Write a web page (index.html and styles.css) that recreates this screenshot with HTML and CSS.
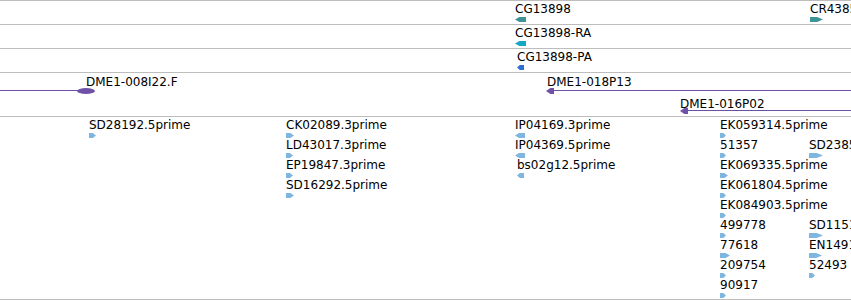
FILE: index.html
```html
<!DOCTYPE html>
<html>
<head>
    <meta charset="UTF-8">
    <link rel="stylesheet" href="styles.css">
</head>
<body>
    <div class="browser">
        <!-- Genes -->
        <div class="track track-gene">
            <div class="feature" style="left:515px;top:1px">
                <div class="name">CG13898</div>
                <div class="glyph rev gene" style="width:11px"></div>
            </div>
            <div class="feature" style="left:810px;top:1px">
                <div class="name">CR43859</div>
                <div class="glyph fwd gene" style="width:13px"></div>
            </div>
        </div>

        <!-- Transcripts -->
        <div class="track track-gene">
            <div class="feature" style="left:515px;top:1px">
                <div class="name">CG13898-RA</div>
                <div class="glyph rev mrna" style="width:11px"></div>
            </div>
        </div>

        <!-- Proteins -->
        <div class="track track-gene">
            <div class="feature" style="left:517px;top:1px">
                <div class="name">CG13898-PA</div>
                <div class="glyph rev protein" style="width:7px"></div>
            </div>
        </div>

        <!-- BAC clones -->
        <div class="track track-clone">
            <div class="clone-line" style="left:0;top:17px;width:80px"></div>
            <div class="clone-end" style="left:77px;top:15px"></div>
            <div class="feature" style="left:86px;top:2px">
                <div class="name">DME1-008I22.F</div>
            </div>

            <div class="feature" style="left:547px;top:2px">
                <div class="name">DME1-018P13</div>
            </div>
            <div class="clone-line" style="left:552px;top:17px;width:320px"></div>
            <div class="clone-head" style="left:546px;top:15px"></div>

            <div class="feature" style="left:680px;top:24px">
                <div class="name">DME1-016P02</div>
            </div>
            <div class="clone-line" style="left:686px;top:37px;width:200px"></div>
            <div class="clone-head" style="left:680px;top:35px"></div>
        </div>

        <!-- ESTs -->
        <div class="track track-est">
            <div class="feature" style="left:89px;top:1px">
                <div class="name">SD28192.5prime</div>
                <div class="glyph fwd est" style="width:7px"></div>
            </div>

            <div class="feature" style="left:286px;top:1px">
                <div class="name">CK02089.3prime</div>
                <div class="glyph fwd est" style="width:8px"></div>
            </div>
            <div class="feature" style="left:286px;top:21px">
                <div class="name">LD43017.3prime</div>
                <div class="glyph fwd est" style="width:7px"></div>
            </div>
            <div class="feature" style="left:286px;top:41px">
                <div class="name">EP19847.3prime</div>
                <div class="glyph fwd est" style="width:7px"></div>
            </div>
            <div class="feature" style="left:286px;top:61px">
                <div class="name">SD16292.5prime</div>
                <div class="glyph fwd est" style="width:8px"></div>
            </div>

            <div class="feature" style="left:515px;top:1px">
                <div class="name">IP04169.3prime</div>
                <div class="glyph rev est" style="width:10px"></div>
            </div>
            <div class="feature" style="left:515px;top:21px">
                <div class="name">IP04369.5prime</div>
                <div class="glyph rev est" style="width:10px"></div>
            </div>
            <div class="feature" style="left:517px;top:41px">
                <div class="name">bs02g12.5prime</div>
                <div class="glyph rev est" style="width:7px"></div>
            </div>

            <div class="feature" style="left:720px;top:1px">
                <div class="name">EK059314.5prime</div>
                <div class="glyph fwd est" style="width:6px"></div>
            </div>
            <div class="feature" style="left:720px;top:21px">
                <div class="name">51357</div>
                <div class="glyph fwd est" style="width:6px"></div>
            </div>
            <div class="feature" style="left:720px;top:41px">
                <div class="name">EK069335.5prime</div>
                <div class="glyph fwd est" style="width:8px"></div>
            </div>
            <div class="feature" style="left:720px;top:61px">
                <div class="name">EK061804.5prime</div>
                <div class="glyph fwd est" style="width:6px"></div>
            </div>
            <div class="feature" style="left:720px;top:81px">
                <div class="name">EK084903.5prime</div>
                <div class="glyph fwd est" style="width:6px"></div>
            </div>
            <div class="feature" style="left:720px;top:101px">
                <div class="name">499778</div>
                <div class="glyph fwd est" style="width:6px"></div>
            </div>
            <div class="feature" style="left:720px;top:121px">
                <div class="name">77618</div>
                <div class="glyph fwd est" style="width:10px"></div>
            </div>
            <div class="feature" style="left:720px;top:141px">
                <div class="name">209754</div>
                <div class="glyph fwd est" style="width:6px"></div>
            </div>
            <div class="feature" style="left:720px;top:161px">
                <div class="name">90917</div>
                <div class="glyph fwd est" style="width:6px"></div>
            </div>

            <div class="feature" style="left:809px;top:21px">
                <div class="name">SD23855.5prime</div>
                <div class="glyph fwd est" style="width:14px"></div>
            </div>
            <div class="feature" style="left:809px;top:101px">
                <div class="name">SD11517.5prime</div>
                <div class="glyph fwd est" style="width:14px"></div>
            </div>
            <div class="feature" style="left:809px;top:121px">
                <div class="name">EN14917.5prime</div>
                <div class="glyph fwd est" style="width:13px"></div>
            </div>
            <div class="feature" style="left:809px;top:141px">
                <div class="name">52493</div>
                <div class="glyph fwd est" style="width:6px"></div>
            </div>
        </div>
    </div>
</body>
</html>
```

FILE: styles.css
```css
body {
    margin: 0;
    background: #ffffff;
    font-family: "DejaVu Sans", sans-serif;
    font-size: 12px;
    color: #000000;
}

.browser {
    width: 851px;
    height: 300px;
    overflow: hidden;
    border-top: 1px solid #bdbdbd;
    box-sizing: border-box;
}

.track {
    position: relative;
    overflow: hidden;
    border-bottom: 1px solid #bdbdbd;
}

.track-gene {
    height: 23px;
}

.track-clone {
    height: 43px;
}

.track-est {
    height: 182px;
}

.feature {
    position: absolute;
    white-space: nowrap;
}

.name {
    height: 14px;
    line-height: 14px;
}

.glyph {
    height: 5px;
    margin-top: 1px;
}

.glyph.rev {
    clip-path: polygon(0 50%, 40% 0, 100% 0, 100% 100%, 40% 100%);
}

.glyph.fwd {
    clip-path: polygon(0 0, 55% 0, 100% 50%, 55% 100%, 0 100%);
}

.gene {
    background: #3c9496;
}

.mrna {
    background: #16a6c6;
}

.protein {
    background: #2e6fd2;
}

.est {
    background: #7eb6df;
}

.clone-line {
    position: absolute;
    height: 1px;
    background: #6d4fa6;
}

.clone-end {
    position: absolute;
    width: 18px;
    height: 6px;
    border-radius: 50%;
    background: #6f52a8;
}

.clone-head {
    position: absolute;
    width: 8px;
    height: 6px;
    background: #6f52a8;
    clip-path: polygon(0 50%, 55% 0, 100% 0, 100% 100%, 55% 100%);
}
```
